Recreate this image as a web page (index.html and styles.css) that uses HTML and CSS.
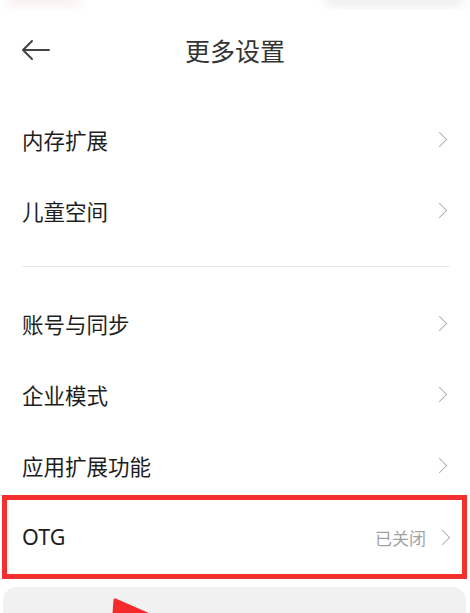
FILE: index.html
```html
<!DOCTYPE html>
<html lang="zh-CN">
<head>
<meta charset="utf-8">
<link rel="stylesheet" href="styles.css">
</head>
<body>
<div class="page">
  <div class="topstrip">
    <div class="blur blur-red"></div>
    <div class="blur blur-gray"></div>
  </div>
  <header class="header">
    <svg class="back" width="30" height="22" viewBox="0 0 30 22">
      <path d="M28 11 H3 M11 2 L2 11 L11 20" fill="none" stroke="#444" stroke-width="2" stroke-linecap="round" stroke-linejoin="round"/>
    </svg>
    <h1 class="title">更多设置</h1>
  </header>
  <div class="group first">
    <div class="row"><span class="label">内存扩展</span><span class="chev"></span></div>
    <div class="row"><span class="label">儿童空间</span><span class="chev"></span></div>
  </div>
  <div class="divider"></div>
  <div class="group">
    <div class="row"><span class="label">账号与同步</span><span class="chev"></span></div>
    <div class="row"><span class="label">企业模式</span><span class="chev"></span></div>
    <div class="row"><span class="label">应用扩展功能</span><span class="chev"></span></div>
    <div class="row row-otg"><span class="label latin">OTG</span><span class="value">已关闭</span><span class="chev"></span></div>
  </div>
  <div class="card">
    <svg class="pointer" width="50" height="20" viewBox="0 0 50 20">
      <polygon points="4,3 48,22 2,30" fill="#f52a2a" stroke="#f52a2a" stroke-width="3" stroke-linejoin="round"/>
    </svg>
  </div>
</div>
</body>
</html>
```
FILE: styles.css
```css
* { box-sizing: border-box; }
html, body { margin: 0; padding: 0; background: #fff; }
body {
  font-family: "Noto Sans CJK SC", "Noto Sans", sans-serif;
  width: 470px;
  height: 613px;
  overflow: hidden;
}
.page { position: relative; }
.topstrip {
  height: 10px;
  display: flex;
  justify-content: space-between;
  align-items: flex-start;
  overflow: hidden;
}
.blur { height: 10px; filter: blur(5px); border-radius: 0 0 8px 8px; }
.blur-red { width: 75px; margin-left: 6px; margin-top: -4px; background: #f8eeee; }
.blur-gray { width: 140px; margin-right: 6px; margin-top: -4px; background: #ececec; }
.header {
  height: 80px;
  display: flex;
  align-items: center;
  justify-content: center;
  position: relative;
}
.back { position: absolute; left: 21px; top: 29px; }
.title {
  margin: 0;
  font-size: 25px;
  font-weight: 400;
  color: #333;
}
.first { margin-top: 14px; }
.row {
  height: 71px;
  display: flex;
  align-items: center;
  padding: 0 21px 0 22px;
}
.label {
  flex: 1;
  font-size: 21.5px;
  color: #1e1e1e;
  line-height: 1;
}
.latin { font-family: "Noto Sans", "Noto Sans CJK SC", sans-serif; font-size: 21.5px; }
.value {
  font-size: 17px;
  color: #a3a3a3;
  margin-right: 11px;
  line-height: 1;
}
.chev {
  width: 11px;
  height: 11px;
  border-top: 1.8px solid #b2b2b2;
  border-right: 1.8px solid #b2b2b2;
  transform: rotate(45deg);
  margin-right: 4px;
}
.divider {
  height: 1px;
  background: #e9e9e9;
  margin: 20px 20px 21px 22px;
}
.row-otg {
  height: 84px;
  margin: -6px 3px 0 2px;
  border: 5px solid #f3302f;
  padding: 0 10px 0 15px;
}
.card {
  position: relative;
  margin: 8px 4px 0 3px;
  height: 27px;
  background: #f1f1f1;
  border-radius: 14px 14px 0 0;
}
.pointer { position: absolute; left: 108px; top: 10px; }
```
